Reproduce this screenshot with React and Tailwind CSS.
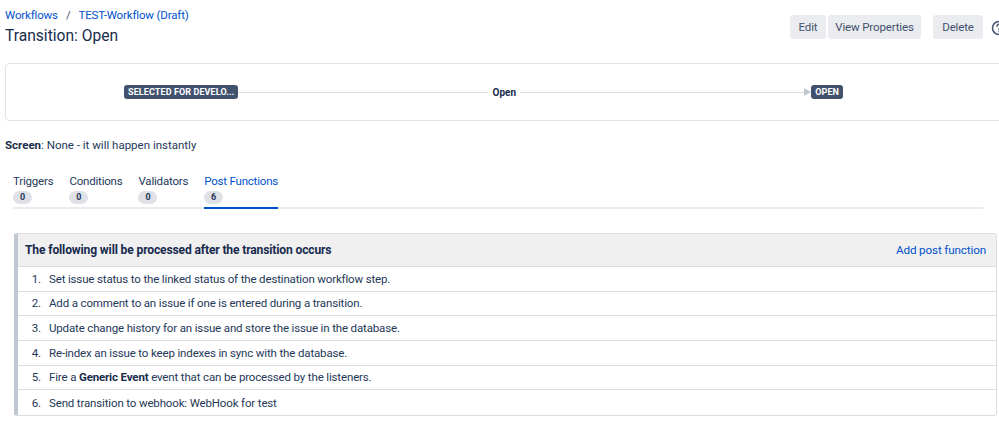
import React from "react";

const steps = [
    <>Set issue status to the linked status of the destination workflow step.</>,
    <>Add a comment to an issue if one is entered during a transition.</>,
    <>Update change history for an issue and store the issue in the database.</>,
    <>Re-index an issue to keep indexes in sync with the database.</>,
    <>Fire a <b className="font-bold text-[#172b4d]">Generic Event</b> event that can be processed by the listeners.</>,
    <>Send transition to webhook: WebHook for test</>,
];

const tabs = [
    {name: "Triggers", count: 0},
    {name: "Conditions", count: 0},
    {name: "Validators", count: 0},
    {name: "Post Functions", count: 6, active: true},
];

function Lozenge({children}) {
    return (
        <span className="shrink-0 rounded-[3px] bg-[#42526e] px-[4px] h-[14px] leading-[14px] text-[9px] font-bold text-white tracking-[0.1px]">
            {children}
        </span>
    );
}

function Btn({children, width}) {
    return (
        <button className={"h-[24px] rounded-[3px] bg-[#ebecf0] text-center text-[11.5px] leading-[24px] text-[#42526e] " + width}>
            {children}
        </button>
    );
}

export default function App() {
    return (
        <div className="h-[424px] w-[999px] overflow-hidden bg-white text-[11.5px] tracking-[-0.15px] text-[#253858] font-['Roboto',sans-serif]">
            <div className="flex justify-between pl-[5px] pt-[8px]">
                <div>
                    <div className="flex h-[15px] items-center leading-[15px] text-[#0052cc]">
                        <span>Workflows</span>
                        <span className="mx-[8px] text-[#42526e]">/</span>
                        <span>TEST-Workflow (Draft)</span>
                    </div>
                    <h1 className="mt-[1px] text-[15.6px] tracking-normal leading-[24px] text-[#172b4d]">Transition: Open</h1>
                </div>
                <div className="mr-[-8px] mt-[7px] flex items-start">
                    <Btn width="w-[36px]">Edit</Btn>
                    <div className="ml-[2px]"><Btn width="w-[93px]">View Properties</Btn></div>
                    <div className="ml-[12px]"><Btn width="w-[50px]">Delete</Btn></div>
                    <svg className="ml-[8px] mt-[5px]" width="16" height="16" viewBox="0 0 16 16" fill="none" stroke="#42526e" strokeWidth="1.5">
                        <circle cx="8" cy="8" r="6.5"/>
                        <path d="M6 6.3a2 2 0 1 1 3 1.7c-.7.4-1 .8-1 1.6" strokeLinecap="round"/>
                        <circle cx="8" cy="11.6" r=".8" fill="#42526e" stroke="none"/>
                    </svg>
                </div>
            </div>

            <div className="ml-[5px] mr-[-10px] mt-[15px] flex h-[58px] items-center rounded-[4px] border border-[#dfe1e6] pl-[118px] pr-[165px]">
                <Lozenge>SELECTED FOR DEVELO...</Lozenge>
                <div className="h-[1px] w-[250px] bg-[#dcdde0]"></div>
                <span className="w-[32px] text-center text-[10px] tracking-normal font-bold text-[#172b4d]">Open</span>
                <div className="h-[1px] flex-1 bg-[#dcdde0]"></div>
                <div className="h-0 w-0 border-y-[4px] border-l-[7px] border-y-transparent border-l-[#c1c7d0]"></div>
                <Lozenge>OPEN</Lozenge>
            </div>

            <p className="ml-[5px] mt-[16px] h-[17px] leading-[17px] tracking-normal">
                <b className="font-bold text-[#172b4d]">Screen</b>: None - it will happen instantly
            </p>

            <div className="mx-[13px] mr-[16px] mt-[19px] flex h-[36px] gap-[16px] border-b-2 border-[#ebecf0] tracking-[-0.2px]">
                {tabs.map((tab) => (
                    <div key={tab.name} className={"mb-[-2px] h-[36px] " + (tab.active ? "border-b-2 border-[#0052cc] text-[#0052cc]" : "")}>
                        <div className="h-[16px] leading-[16px]">{tab.name}</div>
                        <div className="mt-[2px] h-[13px] w-[19px] rounded-full bg-[#dfe1e6] text-center text-[9px] tracking-normal font-bold leading-[13px] text-[#253858]">
                            {tab.count}
                        </div>
                    </div>
                ))}
            </div>

            <div className="ml-[14px] mt-[24px] w-[983px] rounded-[3px] border border-l-4 border-[#dcdde0] border-l-[#c1c7d0]">
                <div className="flex h-[33px] items-center justify-between border-b border-[#dcdde0] bg-[#f0f0f0] pl-[7px] pr-[10px] pt-[1px]">
                    <b className="text-[12.1px] font-bold text-[#172b4d]">The following will be processed after the transition occurs</b>
                    <span className="text-[11.7px] text-[#0052cc]">Add post function</span>
                </div>
                <ol>
                    {steps.map((step, i) => (
                        <li key={i} className={"flex h-[24.7px] items-center pt-[1px] " + (i < 5 ? "border-b border-[#dcdde0]" : "")}>
                            <span className="w-[23px] shrink-0 text-right">{i + 1}.</span>
                            <span className="ml-[8px]">{step}</span>
                        </li>
                    ))}
                </ol>
            </div>
        </div>
    );
}
